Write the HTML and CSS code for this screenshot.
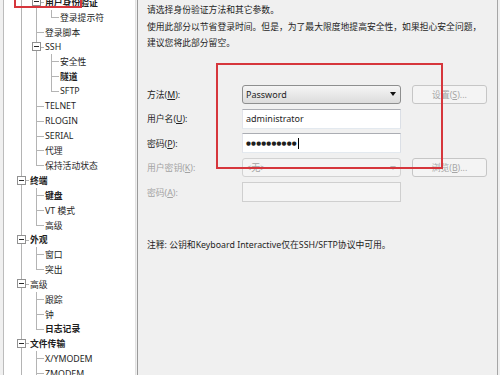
FILE: index.html
```html
<!DOCTYPE html>
<html lang="zh-CN">
<head>
    <meta charset="UTF-8">
    <title>会话属性 - 用户身份验证</title>
    <link rel="stylesheet" href="styles.css">
</head>
<body>
<div class="window">

    <!-- 左侧树 -->
    <div class="tree">
        <ul class="nodes">
            <li class="node"><span class="c v"></span><span class="c t"><i class="box"></i></span><span class="label bold">用户身份验证</span></li>
            <li class="node"><span class="c v"></span><span class="c v"></span><span class="c e"></span><span class="label">登录提示符</span></li>
            <li class="node"><span class="c v"></span><span class="c t"></span><span class="label">登录脚本</span></li>
            <li class="node"><span class="c v"></span><span class="c t"><i class="box"></i></span><span class="label">SSH</span></li>
            <li class="node"><span class="c v"></span><span class="c v"></span><span class="c t"></span><span class="label">安全性</span></li>
            <li class="node"><span class="c v"></span><span class="c v"></span><span class="c t"></span><span class="label bold">隧道</span></li>
            <li class="node"><span class="c v"></span><span class="c v"></span><span class="c e"></span><span class="label">SFTP</span></li>
            <li class="node"><span class="c v"></span><span class="c t"></span><span class="label">TELNET</span></li>
            <li class="node"><span class="c v"></span><span class="c t"></span><span class="label">RLOGIN</span></li>
            <li class="node"><span class="c v"></span><span class="c t"></span><span class="label">SERIAL</span></li>
            <li class="node"><span class="c v"></span><span class="c t"></span><span class="label">代理</span></li>
            <li class="node"><span class="c v"></span><span class="c e"></span><span class="label">保持活动状态</span></li>
            <li class="node"><span class="c t"><i class="box"></i></span><span class="label bold">终端</span></li>
            <li class="node"><span class="c v"></span><span class="c t"></span><span class="label bold">键盘</span></li>
            <li class="node"><span class="c v"></span><span class="c t"></span><span class="label">VT 模式</span></li>
            <li class="node"><span class="c v"></span><span class="c e"></span><span class="label">高级</span></li>
            <li class="node"><span class="c t"><i class="box"></i></span><span class="label bold">外观</span></li>
            <li class="node"><span class="c v"></span><span class="c t"></span><span class="label">窗口</span></li>
            <li class="node"><span class="c v"></span><span class="c e"></span><span class="label">突出</span></li>
            <li class="node"><span class="c t"><i class="box"></i></span><span class="label">高级</span></li>
            <li class="node"><span class="c v"></span><span class="c t"></span><span class="label">跟踪</span></li>
            <li class="node"><span class="c v"></span><span class="c t"></span><span class="label">钟</span></li>
            <li class="node"><span class="c v"></span><span class="c e"></span><span class="label bold">日志记录</span></li>
            <li class="node"><span class="c t"><i class="box"></i></span><span class="label bold">文件传输</span></li>
            <li class="node"><span class="c v"></span><span class="c t"></span><span class="label">X/YMODEM</span></li>
            <li class="node"><span class="c v"></span><span class="c t"></span><span class="label">ZMODEM</span></li>
        </ul>
        <div class="mark mark-tree"></div>
    </div>

    <!-- 右侧设置页 -->
    <div class="page">
        <p class="intro">请选择身份验证方法和其它参数。</p>
        <p class="intro">使用此部分以节省登录时间。但是，为了最大限度地提高安全性，如果担心安全问题，<br>建议您将此部分留空。</p>

        <div class="form">
            <span class="name">方法(<u>M</u>):</span>
            <div class="field select"><span>Password</span><i class="arrow"></i></div>
            <button class="btn" disabled>设置(<u>S</u>)...</button>

            <span class="name">用户名(<u>U</u>):</span>
            <div class="field">administrator</div>
            <span></span>

            <span class="name">密码(<u>P</u>):</span>
            <div class="field"><span class="dots">●●●●●●●●●●</span><i class="caret"></i></div>
            <span></span>

            <span class="name off">用户密钥(<u>K</u>):</span>
            <div class="field select off"><span>&lt;无&gt;</span><i class="arrow"></i></div>
            <button class="btn" disabled>浏览(<u>B</u>)...</button>

            <span class="name off">密码(<u>A</u>):</span>
            <div class="field off"></div>
            <span></span>

            <div class="mark mark-form"></div>
        </div>

        <p class="note">注释: 公钥和Keyboard Interactive仅在SSH/SFTP协议中可用。</p>
    </div>

</div>
</body>
</html>
```

FILE: styles.css
```css
/* 全体 */
body {
    margin: 0;
    background: #f0f0f0;
    font-family: "Noto Sans", "Noto Sans CJK SC", sans-serif;
    font-size: 8.8px;
    color: #1e1e1e;
    overflow: hidden;
}

.window {
    display: flex;
    height: 375px;
    padding-left: 3px;
}

/* 左侧树 */
.tree {
    position: relative;
    width: 131px;
    flex: none;
    background: #fff;
    border-left: 1px solid #bcbcbc;
    border-right: 1px solid #e2e2e2;
    overflow: hidden;
}

.nodes {
    list-style: none;
    margin: -5px 0 0;
    padding: 0 0 0 10px;
}

.node {
    display: flex;
    align-items: center;
    height: 14.85px;
    white-space: nowrap;
}

.c {
    width: 15px;
    height: 100%;
    flex: none;
    display: flex;
    align-items: center;
    justify-content: center;
}

/* 树的连线 */
.v {
    background: linear-gradient(#b4b4b4, #b4b4b4) 7px 0 / 1px 100% no-repeat;
}

.t {
    background:
        linear-gradient(#b4b4b4, #b4b4b4) 7px 0 / 1px 100% no-repeat,
        linear-gradient(#b4b4b4, #b4b4b4) 7px 7px / 8px 1px no-repeat;
}

.e {
    background:
        linear-gradient(#b4b4b4, #b4b4b4) 7px 0 / 1px 8px no-repeat,
        linear-gradient(#b4b4b4, #b4b4b4) 7px 7px / 8px 1px no-repeat;
}

.box {
    width: 9px;
    height: 9px;
    box-sizing: border-box;
    border: 1px solid #919191;
    background: #fff linear-gradient(#2a2a2a, #2a2a2a) center / 5px 1px no-repeat;
    margin-top: -1px;
}

.label {
    margin-left: 1px;
}

.bold {
    font-weight: 700;
}

/* 右侧设置页 */
.page {
    box-sizing: border-box;
    width: 361px;
    flex: none;
    margin-left: 1px;
    border-left: 1px solid #9a9a9a;
    border-right: 1px solid #a6a6a6;
    padding: 3.25px 0 0 9px;
}

.intro {
    margin: 0;
    line-height: 15.5px;
}

.intro + .intro {
    margin-top: 1.5px;
}

.form {
    position: relative;
    display: grid;
    grid-template-columns: 84px 159px 75px;
    grid-auto-rows: 20px;
    column-gap: 11px;
    row-gap: 4.5px;
    align-items: center;
    margin-top: 32.75px;
}

.name {
    white-space: nowrap;
}

.off {
    color: #a3a3a3;
}

/* 输入框 */
.field {
    height: 20px;
    box-sizing: border-box;
    display: flex;
    align-items: center;
    padding: 0 3px;
    border: 1px solid;
    border-color: #abadb3 #dbdfe6 #e3e9ef #e2e3ea;
    background: #fff;
    font-size: 9px;
}

.field.off {
    background: #f4f4f4;
    border-color: #cfcfcf;
}

.select {
    height: 19px;
    justify-content: space-between;
    border-color: #8e8f8f;
    border-radius: 3px;
    background: linear-gradient(#f5f5f5, #dcdcdc);
}

.select.off {
    background: #f4f4f4;
    border-color: #d2d2d2;
}

.arrow {
    width: 0;
    height: 0;
    border-left: 3px solid transparent;
    border-right: 3px solid transparent;
    border-top: 4px solid #111;
    margin-right: 1px;
}

.select.off .arrow {
    border-top-color: #b8b8b8;
}

.dots {
    font-family: "DejaVu Sans", sans-serif;
    font-size: 5.6px;
    letter-spacing: 0.2px;
}

.caret {
    width: 1px;
    height: 11px;
    background: #000;
    margin-left: 1px;
}

/* 按钮 */
.btn {
    height: 19px;
    padding: 0;
    border: 1px solid #c6c6c6;
    border-radius: 3px;
    background: #f4f4f4;
    font: inherit;
    color: #a6a6a6;
}

.note {
    margin: 35.75px 0 0;
    line-height: 14.5px;
}

/* 红色标注框 */
.mark {
    position: absolute;
    box-sizing: border-box;
    border: 2px solid #d6363c;
}

.mark-tree {
    left: 10px;
    top: -12px;
    width: 68px;
    height: 20px;
}

.mark-form {
    left: 69px;
    top: -21px;
    width: 227px;
    height: 106px;
}
```
